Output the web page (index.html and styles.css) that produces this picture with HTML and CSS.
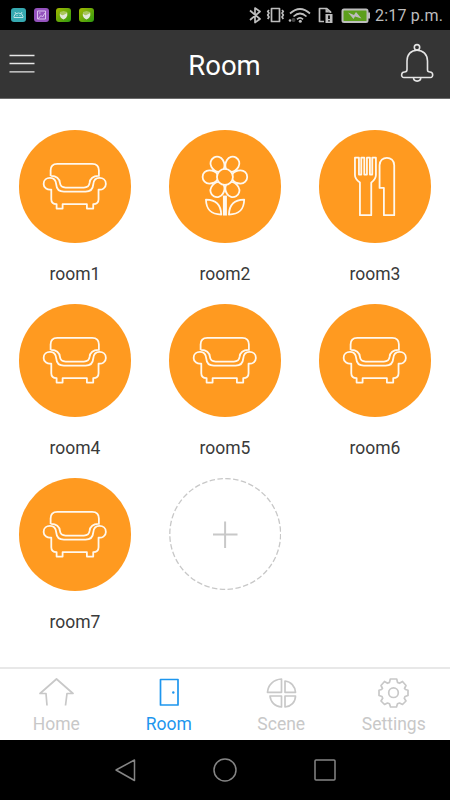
FILE: index.html
```html
<!DOCTYPE html>
<html lang="en">
<head>
    <meta charset="UTF-8">
    <meta name="viewport" content="width=device-width, initial-scale=1.0">
    <title>Room</title>
    <link rel="stylesheet" href="styles.css">
</head>
<body>
    <!-- Shared icons -->
    <svg class="defs" width="0" height="0">
        <symbol id="sofa" viewBox="27 30 338 338">
            <path d="M122 168V152Q122 132 142 132H247Q267 132 267 152V168C250 167 240 177 239 189C238 198 232 203 222 203H167C157 203 151 198 150 189C149 177 139 167 122 168"/>
            <path d="M124 209C113 211 101 205 101 192C101 180 110 174 120 174C133 174 138 182 139 194C140 208 149 215 162 215H227C240 215 249 208 250 194C251 182 256 174 269 174C279 174 288 180 288 192C288 205 276 211 266 209V238Q266 252 250 253V266H231V253H158V266H140V253Q124 252 124 238Z"/>
        </symbol>
        <symbol id="shield" viewBox="0 0 15 14">
            <path d="M4 4L7.500 3L11.200 4V7.500Q11 9.500 7.500 11.300Q4 9.500 4 7.500Z" fill="#a9c65e"/>
            <path d="M3.800 5.500Q5.500 7.800 7.500 7T11.200 5V7.500Q11 9.500 7.500 11.500Q4 9.500 3.800 7.500Z" fill="#e2e8da"/>
        </symbol>
    </svg>

    <div class="status-bar">
        <div class="apps">
            <span class="app teal">
                <svg viewBox="0 0 15 14" width="15" height="14" fill="none" stroke="#bde5e8"><path d="M3 9.500V8.500Q3.500 5 7.500 5T12 8.500V9.500ZM4.700 5.500L4 4M10.300 5.500L11 4M5.500 7.500h1M8.500 7.500h1"/></svg>
            </span>
            <span class="app purple">
                <svg viewBox="0 0 15 14" width="15" height="14" fill="none" stroke="#d9c0ec"><path d="M3.500 3H11.500V11H3.500ZM4 11L7 7.500L8.500 9L11 5M5 5h1.500"/></svg>
            </span>
            <span class="app green"><svg width="15" height="14"><use href="#shield"/></svg></span>
            <span class="app green"><svg width="15" height="14"><use href="#shield"/></svg></span>
        </div>
        <svg class="signals" viewBox="248 5 124 20" width="124" height="20">
            <path d="M250 10.500L260 19L255 22.500V8L260 11.500L250 20"/>
            <path d="M271.500 8.500H279.500V21.500H271.500ZM269 10L267.700 11.500L269 13L267.700 15L269 17L267.700 19M282 10L283.300 11.500L282 13L283.300 15L282 17L283.300 19"/>
            <path d="M290 13.500Q300 4.500 310 13.500M293.500 16.500Q300 10.500 306.500 16.500M297 19.300Q300 16.500 303 19.300"/>
            <circle class="solid" cx="300.300" cy="21.300" r="1.500"/>
            <circle class="solid" cx="290" cy="20.500" r="1.300"/>
            <circle class="dim" cx="293.500" cy="20" r="2"/>
            <path d="M324 21.500H319.500V8.500H326.500L330.500 12V13"/>
            <path class="solid" d="M325.500 8.500L330 12.500H325.500ZM325.500 14H332.500V23H325.500Z"/>
            <path class="mark" d="M329 15.500V19M329 20.300V21.600"/>
            <rect class="battery" x="342.500" y="9.500" width="25" height="12.500" rx="1.500"/>
            <path class="solid" d="M368 12.500h2v6h-2ZM348 12.500L354 15L356 12L361.500 18.500L355 16.500L353.500 19Z"/>
        </svg>
        <span class="time">2:17 p.m.</span>
    </div>

    <header class="header">
        <svg class="menu-icon" viewBox="0 0 26 20" width="26" height="20"><path d="M0.500 2.500H25.500M0.500 10.500H25.500M0.500 18.800H25.500"/></svg>
        <h1 class="title">Room</h1>
        <svg class="bell" viewBox="400 43 34 40" width="34" height="40">
            <circle cx="417" cy="47.300" r="2.700"/>
            <path d="M407 69.500V61C407 54.500 411 50.200 417 50.200S427.500 54.500 427.500 61V70Q427.500 72 430 72C433.500 72 433.500 77.500 430.500 77.500H404C400.500 77.500 401 72 404.500 72Q407 72 407 69.500M413.500 77.500C413.500 82.300 420.800 82.300 420.800 77.500"/>
        </svg>
    </header>

    <main class="rooms">
        <div class="room">
            <div class="circle"><svg><use href="#sofa"/></svg></div>
            <span class="label">room1</span>
        </div>
        <div class="room">
            <div class="circle">
                <svg viewBox="27 30 338 338">
                    <g transform="translate(195 171)">
                        <circle r="24"/>
                        <path id="petal" d="M22 -8C27 -16 37 -20 47 -20A20 20 0 0 1 47 20C37 20 27 16 22 8"/>
                        <use href="#petal" transform="rotate(60)"/>
                        <use href="#petal" transform="rotate(120)"/>
                        <use href="#petal" transform="rotate(180)"/>
                        <use href="#petal" transform="rotate(240)"/>
                        <use href="#petal" transform="rotate(300)"/>
                    </g>
                    <path class="stem" d="M195 227V287"/>
                    <path d="M138 239C139 268 151 284 184 284C183 254 168 239 138 239ZM253 239C252 268 240 284 207 284C208 254 223 239 253 239Z"/>
                </svg>
            </div>
            <span class="label">room2</span>
        </div>
        <div class="room">
            <div class="circle">
                <svg viewBox="27 30 338 338">
                    <path d="M135 113H147V164H154V113H163V164H171V113H180V164H187V113H198V165Q198 177 184 188V286H150V188Q135 177 135 165Z"/>
                    <path d="M209 204V136C209 106 253 106 253 136V286H222V204Z"/>
                </svg>
            </div>
            <span class="label">room3</span>
        </div>
        <div class="room">
            <div class="circle"><svg><use href="#sofa"/></svg></div>
            <span class="label">room4</span>
        </div>
        <div class="room">
            <div class="circle"><svg><use href="#sofa"/></svg></div>
            <span class="label">room5</span>
        </div>
        <div class="room">
            <div class="circle"><svg><use href="#sofa"/></svg></div>
            <span class="label">room6</span>
        </div>
        <div class="room">
            <div class="circle"><svg><use href="#sofa"/></svg></div>
            <span class="label">room7</span>
        </div>
        <div class="room">
            <svg class="add" viewBox="0 0 112.500 112.500">
                <circle class="dashes" cx="56.200" cy="56" r="55.400"/>
                <path class="plus" d="M44 56.500H68.500M56.100 43.500V70"/>
            </svg>
        </div>
    </main>

    <nav class="tabs">
        <div class="tab">
            <svg viewBox="0 0 36 32" width="36" height="32"><path d="M9 29.500L8 17.500H2L18.500 3L35 17.500H29L27.500 29.500"/></svg>
            <span>Home</span>
        </div>
        <div class="tab active">
            <svg viewBox="0 0 36 32" width="36" height="32"><path d="M10.500 3.500H28V29H10.500Z"/><circle class="knob" cx="23.300" cy="16.500" r="1.200"/></svg>
            <span>Room</span>
        </div>
        <div class="tab">
            <svg viewBox="0 0 36 32" width="36" height="32"><path d="M18.500 3V16.300H4.500C5 9 10.500 3.500 18.500 3ZM22 5C28 5.500 32 10.500 32.500 16.300H22ZM7 20H18.500V31C12 30.500 7.500 26 7 20ZM22 20H32.500C32.500 26 28 30.500 22 31Z"/></svg>
            <span>Scene</span>
        </div>
        <div class="tab">
            <svg viewBox="0 0 36 32" width="36" height="32">
                <circle cx="18.500" cy="16.700" r="4.800"/>
                <path d="M15.300 3H21.700L22.500 6.400L24.500 7.300L27.500 5.500L31 9.500L29.500 12.500L30.500 13.500L33 14.200V19.500L30 20.500L29.300 22.200L31 25L27.500 28.500L24.500 27L22.500 27.800L21.500 31H15.500L14.500 27.800L12.500 27L9.500 28.500L6 25L7.700 22.200L7 20.500L4 19.500V14.200L6.500 13.500L7.500 12.500L6 9.500L9.500 5.500L12.500 7.300L14.500 6.400Z"/>
            </svg>
            <span>Settings</span>
        </div>
    </nav>

    <div class="system-nav">
        <svg viewBox="0 0 24 24" width="24" height="24"><path d="M3 12L21.500 2V22.500Z"/></svg>
        <svg viewBox="0 0 24 24" width="24" height="24"><circle cx="12" cy="12" r="11"/></svg>
        <svg viewBox="0 0 24 24" width="24" height="24"><rect x="2" y="2" width="20" height="20" rx="1"/></svg>
    </div>
</body>
</html>
```
FILE: styles.css
```css
* {
    box-sizing: border-box;
}

body {
    display: flex;
    flex-direction: column;
    width: 450px;
    height: 800px;
    margin: 0;
    overflow: hidden;
    background-color: #fff;
    font-family: Roboto, sans-serif;
}

svg {
    display: block;
    flex-shrink: 0;
    fill: none;
    stroke-linejoin: round;
}

.defs {
    display: none;
}

/* Status bar */
.status-bar {
    display: flex;
    align-items: center;
    height: 30px;
    padding: 0 8px 0 11px;
    background-color: #000;
}

.apps {
    display: flex;
    gap: 7.500px;
    margin-right: auto;
}

.app {
    width: 15px;
    height: 14px;
    border-radius: 3px;
}

.teal {
    background-color: #36a9b0;
}

.purple {
    background-color: #9452bd;
}

.green {
    background: linear-gradient(135deg, #a5b800, #2c9a10);
}

.signals {
    margin-right: 3px;
    stroke: #bdbdbd;
    stroke-width: 1.7;
}

.signals .solid {
    fill: #bdbdbd;
    stroke: none;
}

.signals .dim {
    fill: #444;
    stroke: none;
}

.signals .mark {
    stroke: #000;
}

.signals .battery {
    fill: #5c9f1c;
    stroke-width: 2;
}

.time {
    width: 67px;
    color: #bdbdbd;
    font-size: 16px;
    letter-spacing: 0.2px;
    white-space: nowrap;
}

/* Header */
.header {
    display: flex;
    align-items: center;
    justify-content: space-between;
    height: 69px;
    padding: 0 16px 2px 9px;
    border-bottom: 1px solid #6b6b6b;
    background-color: #353535;
}

.menu-icon {
    margin-right: 14px;
    stroke: #e6e6e6;
    stroke-width: 1.3;
}

.title {
    margin: 4px 0 0;
    color: #fff;
    font-size: 27.500px;
    font-weight: 400;
}

.bell {
    stroke: #e4e4e4;
    stroke-width: 1.6;
}

/* Rooms */
.rooms {
    display: grid;
    grid-template-columns: repeat(3, 150px);
    grid-auto-rows: 174px;
    flex: 1;
    padding-top: 31px;
}

.room {
    display: flex;
    flex-direction: column;
    align-items: center;
}

.circle {
    width: 112.500px;
    height: 112.500px;
    border-radius: 50%;
    background-color: #ff9a20;
}

.circle svg {
    width: 100%;
    height: 100%;
    stroke: #fff8ee;
    stroke-width: 5.4;
}

.circle .stem {
    stroke-width: 12;
}

.label {
    margin-top: 21px;
    color: #3a3a3a;
    font-size: 17.500px;
    line-height: 21px;
}

.add {
    width: 112.500px;
    height: 112.500px;
    stroke: #c8c8c8;
}

.dashes {
    stroke-width: 1.3;
    stroke-dasharray: 5.5 2.4;
}

.plus {
    stroke-width: 2;
}

/* Tabs */
.tabs {
    display: grid;
    grid-template-columns: repeat(4, 1fr);
    height: 73px;
    padding-top: 7px;
    border-top: 2px solid #e8e8e8;
}

.tab {
    display: flex;
    flex-direction: column;
    align-items: center;
    color: #c8c8c8;
    font-size: 17.500px;
    line-height: 21px;
    stroke: currentColor;
    stroke-width: 1.7;
}

.tab svg {
    margin: 0 1px 6px 0;
}

.tab span {
    stroke: none;
}

.tab.active {
    color: #1e96ee;
}

.knob {
    fill: currentColor;
    stroke: none;
}

/* Android buttons */
.system-nav {
    display: flex;
    align-items: center;
    justify-content: center;
    gap: 76px;
    height: 60px;
    background-color: #000;
    stroke: #858585;
    stroke-width: 1.5;
}
```
